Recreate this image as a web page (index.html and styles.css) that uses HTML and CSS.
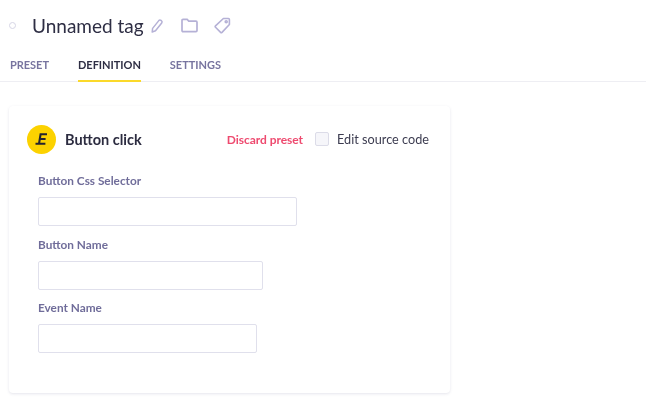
FILE: index.html
```html
<!DOCTYPE html>
<html lang="en">
<head>
<meta charset="utf-8">
<title>Unnamed tag</title>
<link rel="stylesheet" href="styles.css">
</head>
<body>
<header class="top">
  <div class="title-row">
    <span class="status"></span>
    <h1 class="title">Unnamed tag</h1>
    <svg class="ico pencil" width="14" height="16" viewBox="0 0 14 16" fill="none" stroke="#b5b1d6" stroke-width="1.5" stroke-linejoin="round"><path d="M2.6 10.4 8.8 2.6a1.6 1.6 0 0 1 2.2-.2l.5.4a1.6 1.6 0 0 1 .2 2.2l-6.2 7.8-3.3 1.2z"/></svg>
    <svg class="ico folder" width="17" height="15" viewBox="0 0 17 15" fill="none" stroke="#b5b1d6" stroke-width="1.7" stroke-linejoin="round"><path d="M1 2.4A1 1 0 0 1 2 1.4h4.2l1.6 1.8H15a1 1 0 0 1 1 1v8.4a1 1 0 0 1-1 1H2a1 1 0 0 1-1-1z"/></svg>
    <svg class="ico tag" width="17" height="17" viewBox="0 0 17 17" fill="none" stroke="#b5b1d6" stroke-width="1.6" stroke-linejoin="round"><path d="M9.4 1.5h5a1 1 0 0 1 1 1v5L8 15.4a1 1 0 0 1-1.4 0L1.5 10.2a1 1 0 0 1 0-1.4z"/><circle cx="12.2" cy="4.7" r="1"/></svg>
  </div>
  <nav class="tabs">
    <a class="tab">PRESET</a>
    <a class="tab active">DEFINITION</a>
    <a class="tab">SETTINGS</a>
  </nav>
</header>
<main class="card">
  <div class="card-head">
    <span class="badge"><svg width="13" height="12" viewBox="0 0 13 12" fill="none" stroke="#23232f" stroke-width="2.1"><path d="M12 1.2H5.6L4 10.8h6.4M5 6h5.6M0.5 10.8h4"/></svg></span>
    <h2 class="card-title">Button click</h2>
    <a class="discard">Discard preset</a>
    <label class="edit"><span class="check"></span>Edit source code</label>
  </div>
  <div class="field field-first">
    <label class="label">Button Css Selector</label>
    <input class="input w-a" type="text">
  </div>
  <div class="field">
    <label class="label">Button Name</label>
    <input class="input w-b" type="text">
  </div>
  <div class="field">
    <label class="label">Event Name</label>
    <input class="input w-c" type="text">
  </div>
</main>
</body>
</html>
```
FILE: styles.css
```css
* { box-sizing: border-box; }
html, body { margin: 0; padding: 0; }
body {
  width: 646px;
  height: 412px;
  overflow: hidden;
  background: #fff;
  font-family: Lato, "Noto Sans", sans-serif;
  color: #2c2c40;
  filter: blur(0.35px);
}
.top { border-bottom: 1px solid #eeeef3; height: 82px; }
.title-row { display: flex; align-items: center; height: 51px; padding-left: 9px; }
.status { width: 7px; height: 7px; border: 1px solid #d5d4e4; border-radius: 50%; margin-right: 16px; }
.title { margin: 0; font-size: 19px; font-weight: 400; line-height: 26px; color: #2e2e44; }
.ico { display: block; }
.pencil { margin-left: 6px; }
.folder { margin-left: 17px; }
.tag { margin-left: 16px; }
.tabs { display: flex; padding: 1px 0 0 10px; gap: 29px; height: 31px; }
.tab { font-size: 11px; font-weight: 700; line-height: 26px; color: #77749f; height: 30px; letter-spacing: -0.03px; }
.tab.active { color: #2e2e44; border-bottom: 2px solid #fbd92a; }
.card {
  margin: 24px 0 0 9px;
  width: 441px;
  height: 287px;
  background: #fff;
  border-radius: 4px;
  box-shadow: 0 1px 3px rgba(70, 70, 120, 0.14);
  padding: 18px 21px 0 18px;
}
.card-head { display: flex; align-items: center; height: 30px; }
.badge { width: 29px; height: 29px; border-radius: 50%; background: #fcd200; display: flex; align-items: center; justify-content: center; margin-right: 9px; }
.card-title { margin: 0; font-size: 14.5px; font-weight: 700; color: #2c2c40; flex: 1; }
.discard { font-size: 12px; font-weight: 700; color: #ee4a6f; margin-right: 12px; letter-spacing: -0.05px; }
.edit { display: flex; align-items: center; font-size: 12.7px; color: #3c3c50; }
.check { width: 14px; height: 14px; border: 1px solid #dcdce8; border-radius: 2px; background: #f6f6fa; margin-right: 8px; }
.field { margin-left: 11px; }
.field-first { margin-top: 19px; }
.field + .field { margin-top: 10.5px; }
.label { display: block; font-size: 11.8px; font-weight: 700; line-height: 16px; color: #706d9a; margin-bottom: 8px; }
.input { display: block; height: 29px; border: 1px solid #e0e0ec; border-radius: 2px; background: #fff; padding: 0; }
.w-a { width: 259px; }
.w-b { width: 225px; }
.w-c { width: 219px; }
```
